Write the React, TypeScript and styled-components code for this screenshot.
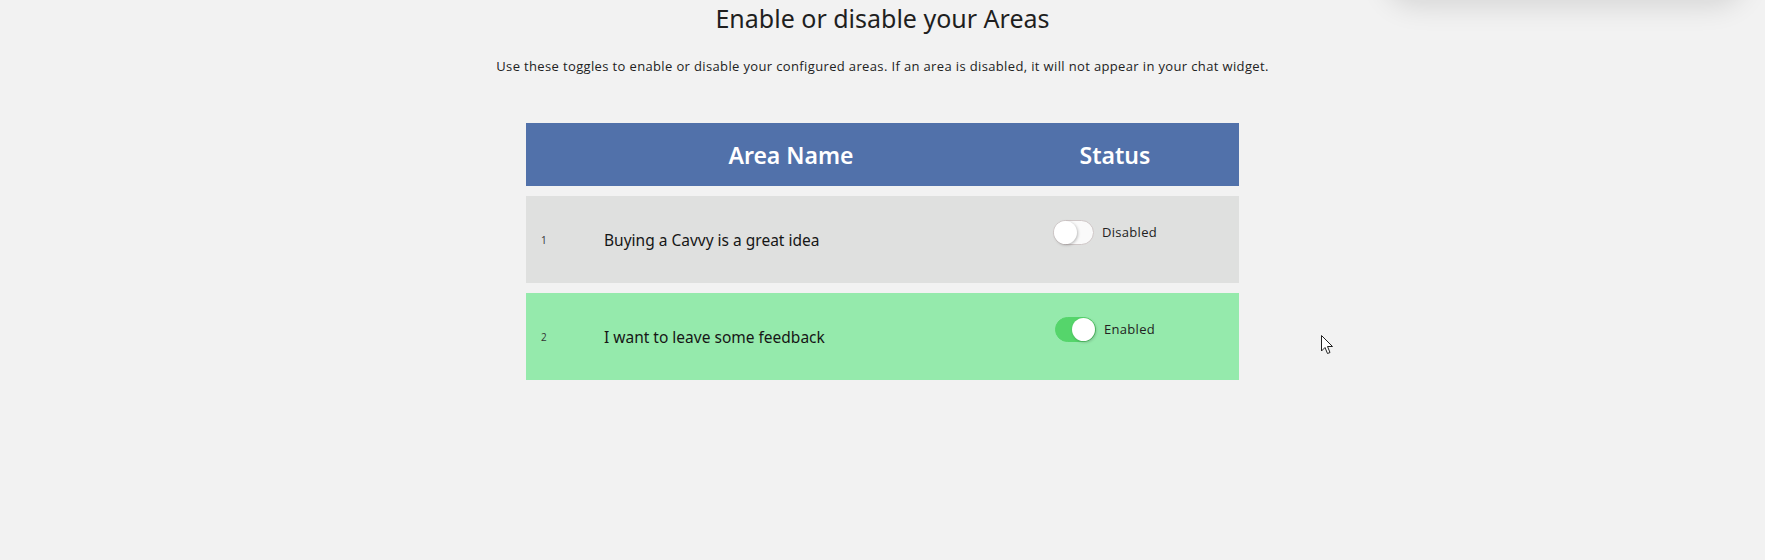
import styled, { createGlobalStyle } from "styled-components";
import { useState } from "react";

const GlobalStyle = createGlobalStyle`
  html, body {
    margin: 0;
    padding: 0;
    background: #f2f2f2;
  }
  body {
    font-family: "Noto Sans", "Open Sans", sans-serif;
    color: #222;
    overflow: hidden;
  }
`;

const Page = styled.div`
  position: relative;
  height: 560px;
  padding-top: 2px;
  box-sizing: border-box;
  text-align: center;
`;

const Title = styled.h2`
  margin: 0;
  font-family: "Noto Sans", sans-serif;
  font-size: 25px;
  font-weight: 400;
  line-height: 32px;
  color: #1f1f1f;
`;

const Subtitle = styled.p`
  margin: 24px 0 0;
  font-family: "Open Sans", sans-serif;
  font-size: 13px;
  letter-spacing: 0.36px;
  line-height: 17px;
  color: #222;
`;

const Table = styled.table`
  width: 713px;
  margin: 38px auto 0;
  table-layout: fixed;
  border-collapse: separate;
  border-spacing: 0 10px;
`;

const HeadCell = styled.th`
  height: 63px;
  padding: 0;
  background: #5171aa;
  color: #fff;
  font-family: "Noto Sans", sans-serif;
  font-size: 23px;
  font-weight: 600;
  text-align: center;
`;

const Row = styled.tr<{ $enabled: boolean }>`
  background: ${(p) => (p.$enabled ? "#95eaac" : "#dfe0df")};
`;

const NumberCell = styled.td`
  height: 87px;
  padding: 0 0 0 15px;
  font-family: "Open Sans", sans-serif;
  font-size: 10px;
  text-align: left;
  color: #333;
`;

const NameCell = styled.td`
  padding: 0 0 0 13px;
  font-family: "Noto Sans", sans-serif;
  font-size: 15.5px;
  font-weight: 400;
  text-align: left;
  color: #161616;
`;

const StatusCell = styled.td`
  padding: 0 20px 10px 0;
  text-align: center;
`;

const StatusWrap = styled.label`
  display: inline-flex;
  align-items: center;
  gap: 8px;
  cursor: pointer;
`;

const Track = styled.span<{ $on: boolean }>`
  position: relative;
  display: inline-block;
  width: 41px;
  height: 25px;
  border-radius: 13px;
  box-sizing: border-box;
  background: ${(p) => (p.$on ? "#55d56b" : "#fafafa")};
  border: 1px solid ${(p) => (p.$on ? "#55d56b" : "#cfc7c7")};
  transition: background 0.2s;
`;

const Knob = styled.span<{ $on: boolean }>`
  position: absolute;
  top: 0;
  left: ${(p) => (p.$on ? "16px" : "0")};
  width: 23px;
  height: 23px;
  border-radius: 50%;
  background: #fff;
  box-shadow: 1px 1px 3px rgba(0, 0, 0, 0.25);
  transition: left 0.2s;
`;

const StatusText = styled.span`
  font-family: "Open Sans", sans-serif;
  font-size: 13px;
  letter-spacing: 0.3px;
  color: #222;
`;

const HiddenInput = styled.input`
  display: none;
`;

const TopShadow = styled.div`
  position: absolute;
  top: -60px;
  right: 20px;
  width: 360px;
  height: 60px;
  border-radius: 30px;
  box-shadow: 0 6px 28px rgba(0, 0, 0, 0.12);
`;

const Cursor = styled.svg`
  position: absolute;
  left: 1321px;
  top: 335px;
`;

type Area = { id: number; name: string; enabled: boolean };

const initialAreas: Area[] = [
  { id: 1, name: "Buying a Cavvy is a great idea", enabled: false },
  { id: 2, name: "I want to leave some feedback", enabled: true },
];

function Toggle(props: { on: boolean; onChange: () => void }) {
  return (
    <StatusWrap>
      <HiddenInput type="checkbox" checked={props.on} onChange={props.onChange} />
      <Track $on={props.on}>
        <Knob $on={props.on} />
      </Track>
      <StatusText>{props.on ? "Enabled" : "Disabled"}</StatusText>
    </StatusWrap>
  );
}

export default function App() {
  const [areas, setAreas] = useState(initialAreas);

  function toggle(id: number) {
    setAreas((list) =>
      list.map((a) => (a.id === id ? { ...a, enabled: !a.enabled } : a)),
    );
  }

  return (
    <>
      <GlobalStyle />
      <Page>
        <TopShadow />
        <Title>Enable or disable your Areas</Title>
        <Subtitle>
          Use these toggles to enable or disable your configured areas. If an
          area is disabled, it will not appear in your chat widget.
        </Subtitle>
        <Table>
          <colgroup>
            <col style={{ width: 65 }} />
            <col style={{ width: 400 }} />
            <col style={{ width: 248 }} />
          </colgroup>
          <thead>
            <tr>
              <HeadCell />
              <HeadCell>Area Name</HeadCell>
              <HeadCell>Status</HeadCell>
            </tr>
          </thead>
          <tbody>
            {areas.map((area) => (
              <Row key={area.id} $enabled={area.enabled}>
                <NumberCell>{area.id}</NumberCell>
                <NameCell>{area.name}</NameCell>
                <StatusCell>
                  <Toggle on={area.enabled} onChange={() => toggle(area.id)} />
                </StatusCell>
              </Row>
            ))}
          </tbody>
        </Table>
        <Cursor width="13" height="20" viewBox="0 0 13 20">
          <path
            d="M0.5 0.5 L0.5 16 L4 12.5 L6.5 18.5 L9 17.5 L6.5 11.5 L11.5 11.5 Z"
            fill="#fff"
            stroke="#222"
            strokeWidth="1"
            strokeLinejoin="round"
          />
        </Cursor>
      </Page>
    </>
  );
}
